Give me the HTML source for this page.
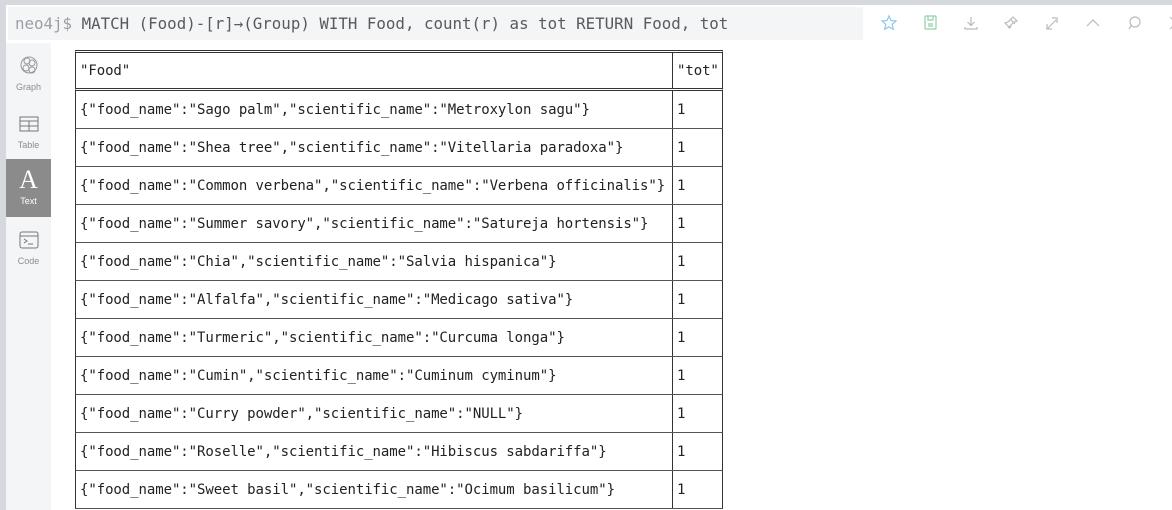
<!DOCTYPE html>
<html><head><meta charset="utf-8"><style>
*{margin:0;padding:0;box-sizing:border-box}
html,body{width:1172px;height:510px;overflow:hidden}
body{background:#d5d8dc;font-family:"Liberation Sans",sans-serif;position:relative}
.panel{position:absolute;left:6px;top:5px;width:1166px;height:505px;background:#fff}
.q{position:absolute;left:8px;top:7px;width:855px;height:33px;background:#f4f5f7;font-family:"DejaVu Sans Mono","Liberation Mono",monospace;font-size:15.8px;color:#5a5a5a;line-height:33px;padding-left:7px;white-space:nowrap}
.q .p{color:#9aa0a6}
.side{position:absolute;left:6px;top:43px;width:45px;height:467px;background:#f4f5f7}
.tab{position:absolute;left:0;width:45px;height:58px;text-align:center;font-size:9px;color:#8a8e93}
.tab svg{display:block;margin:10px auto 3px}
.tab.act{background:#8b8b8b;color:#fff}
.tbl{position:absolute;left:75px;top:50px;width:648px;font-family:"DejaVu Sans Mono","Liberation Mono",monospace;font-size:14px;color:#222;letter-spacing:-0.07px}
.row{position:absolute;left:0;width:648px;height:38px;border-left:1px solid #333;border-right:1px solid #333;border-bottom:1px solid #555}
.row div{position:absolute;top:0;line-height:38px;white-space:nowrap}
.c1{left:4px}
.c2{left:601px}
.div{position:absolute;left:596px;top:0;width:1px;height:100%;background:#333}
.icons{position:absolute;top:14px}
</style></head><body>
<div class="panel"></div>
<div class="q"><span class="p">neo4j$</span> MATCH (Food)-[r]→(Group) WITH Food, count(r) as tot RETURN Food, tot</div>
<svg class="icons" style="left:880px" width="300" height="18" fill="none" stroke-width="1.2">
<path d="M9 2l2 4.5 5 .5-3.8 3.3 1.1 5L9 12.8 4.7 15.3l1.1-5L2 7l5-.5z" stroke="#8cc8f0"/>
<rect x="45" y="2" width="11" height="13" rx="1" stroke="#8fd0a8"/><path d="M48 2v4h5V2M48 10h5M48 12h5" stroke="#8fd0a8"/>
<path d="M91 3v8M87.5 8l3.5 3.5L94.5 8M85 13v2h12v-2" stroke="#bbb"/>
<path d="M128 14l4-4M130 5l5 5M133 3l4 4-3 1-3 3-1 3-5-5 3-1 3-3z" stroke="#bbb"/>
<path d="M167 15l9-9M172 4h5v5M167 10v5h5" stroke="#bbb"/>
<path d="M207 12l6-6 6 6" stroke="#bbb"/>
<circle cx="255" cy="8" r="5" stroke="#bbb"/><path d="M251 12l-2 3" stroke="#bbb"/>
<path d="M290 3l6 6-6 6" stroke="#bbb"/>
</svg>
<div class="side">
 <div class="tab" style="top:0"><svg style="margin-top:12px;margin-bottom:5px" width="20" height="22" viewBox="0 0 20 22" fill="none" stroke="#999" stroke-width="1"><circle cx="10" cy="10" r="8"/><circle cx="8" cy="6" r="3"/><circle cx="13" cy="8" r="3"/><circle cx="7" cy="13" r="3"/><circle cx="13" cy="15" r="3"/></svg>Graph</div>
 <div class="tab" style="top:58px"><svg style="margin-top:14px;margin-bottom:7px" width="20" height="18" viewBox="0 0 20 18" fill="none" stroke="#777" stroke-width="1"><rect x="1" y="2" width="18" height="14"/><path d="M1 6h18M1 11h18M10 6v10"/></svg>Table</div>
 <div class="tab act" style="top:116px"><div style="font-family:'Liberation Serif',serif;font-size:26px;line-height:26px;margin-top:8px;margin-bottom:3px">A</div>Text</div>
 <div class="tab" style="top:174px"><svg style="margin-top:13px;margin-bottom:6px" width="20" height="20" viewBox="0 0 20 20" fill="none" stroke="#777" stroke-width="1"><rect x="1" y="2" width="18" height="16" rx="2"/><path d="M1 6h18M5 9l3 2-3 2M9 14h5"/></svg>Code</div>
</div>
<div class="tbl">
 <div class="row" style="top:0;height:41px;border-top:3px double #333;border-bottom:3px double #333"><div class="c1" style="line-height:36px">"Food"</div><div class="div"></div><div class="c2" style="line-height:36px">"tot"</div></div>
 <div class="row" style="top:41px"><div class="c1">{"food_name":"Sago palm","scientific_name":"Metroxylon sagu"}</div><div class="div"></div><div class="c2">1</div></div>
 <div class="row" style="top:79px"><div class="c1">{"food_name":"Shea tree","scientific_name":"Vitellaria paradoxa"}</div><div class="div"></div><div class="c2">1</div></div>
 <div class="row" style="top:117px"><div class="c1">{"food_name":"Common verbena","scientific_name":"Verbena officinalis"}</div><div class="div"></div><div class="c2">1</div></div>
 <div class="row" style="top:155px"><div class="c1">{"food_name":"Summer savory","scientific_name":"Satureja hortensis"}</div><div class="div"></div><div class="c2">1</div></div>
 <div class="row" style="top:193px"><div class="c1">{"food_name":"Chia","scientific_name":"Salvia hispanica"}</div><div class="div"></div><div class="c2">1</div></div>
 <div class="row" style="top:231px"><div class="c1">{"food_name":"Alfalfa","scientific_name":"Medicago sativa"}</div><div class="div"></div><div class="c2">1</div></div>
 <div class="row" style="top:269px"><div class="c1">{"food_name":"Turmeric","scientific_name":"Curcuma longa"}</div><div class="div"></div><div class="c2">1</div></div>
 <div class="row" style="top:307px"><div class="c1">{"food_name":"Cumin","scientific_name":"Cuminum cyminum"}</div><div class="div"></div><div class="c2">1</div></div>
 <div class="row" style="top:345px"><div class="c1">{"food_name":"Curry powder","scientific_name":"NULL"}</div><div class="div"></div><div class="c2">1</div></div>
 <div class="row" style="top:383px"><div class="c1">{"food_name":"Roselle","scientific_name":"Hibiscus sabdariffa"}</div><div class="div"></div><div class="c2">1</div></div>
 <div class="row" style="top:421px"><div class="c1">{"food_name":"Sweet basil","scientific_name":"Ocimum basilicum"}</div><div class="div"></div><div class="c2">1</div></div>
</div>
</body></html>
